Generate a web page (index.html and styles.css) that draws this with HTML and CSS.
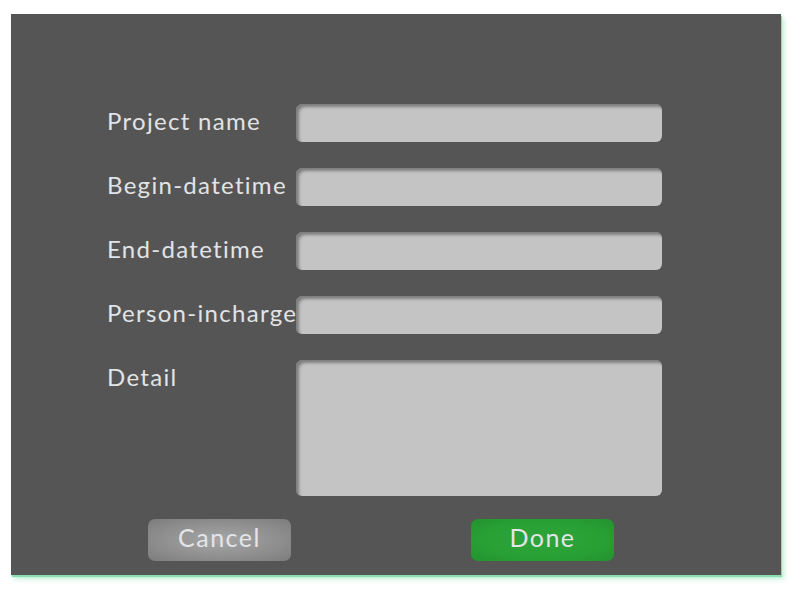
FILE: index.html
```html
<!DOCTYPE html>
<html>
<head>
<meta charset="utf-8">
<link rel="stylesheet" href="styles.css">
</head>
<body>
<div class="panel">
  <form class="form">
    <div class="row">
      <label class="label">Project name</label>
      <div class="field"></div>
    </div>
    <div class="row">
      <label class="label">Begin-datetime</label>
      <div class="field"></div>
    </div>
    <div class="row">
      <label class="label">End-datetime</label>
      <div class="field"></div>
    </div>
    <div class="row">
      <label class="label">Person-incharge</label>
      <div class="field"></div>
    </div>
    <div class="row">
      <label class="label">Detail</label>
      <div class="field area"></div>
    </div>
    <div class="actions">
      <button type="button" class="btn cancel">Cancel</button>
      <button type="button" class="btn done">Done</button>
    </div>
  </form>
</div>
</body>
</html>
```
FILE: styles.css
```css
html, body {
  margin: 0;
  padding: 0;
  background: #ffffff;
}
body {
  padding: 14px 0 0 11px;
  min-height: 591px;
  box-sizing: border-box;
  font-family: "Lato", "DejaVu Sans", sans-serif;
}
.panel {
  width: 770px;
  height: 561px;
  box-sizing: border-box;
  background: #555555;
  padding: 90px 0 0 96px;
  box-shadow: 1px 2px 1px rgba(130, 220, 170, 0.9), 3px 4px 5px rgba(150, 230, 190, 0.6);
}
.form {
  display: flex;
  flex-direction: column;
  gap: 26px;
}
.row {
  display: flex;
  align-items: flex-start;
}
.label {
  width: 189px;
  color: #e2e3e6;
  font-size: 24px;
  letter-spacing: 1.3px;
  line-height: 30px;
  white-space: nowrap;
  padding-top: 2px;
}
.field {
  width: 366px;
  height: 38px;
  box-sizing: border-box;
  background: #c4c4c4;
  border-radius: 6px;
  box-shadow: inset 3px 3px 3px rgba(70, 70, 70, 0.55);
}
.field.area {
  height: 136px;
}
.actions {
  display: flex;
  gap: 180px;
  margin: -3px 0 0 41px;
}
.btn {
  width: 143px;
  height: 42px;
  border: none;
  border-radius: 7px;
  font-family: inherit;
  font-size: 25px;
  letter-spacing: 1.5px;
  color: #e4e5e8;
  padding: 0 0 7px 0;
}
.cancel {
  background: radial-gradient(ellipse at center, #a6a6a6 0%, #8e8e8e 60%, #7c7c7c 100%);
}
.done {
  background: radial-gradient(ellipse at center, #2ea53a 0%, #28a034 60%, #23922e 100%);
}
```
